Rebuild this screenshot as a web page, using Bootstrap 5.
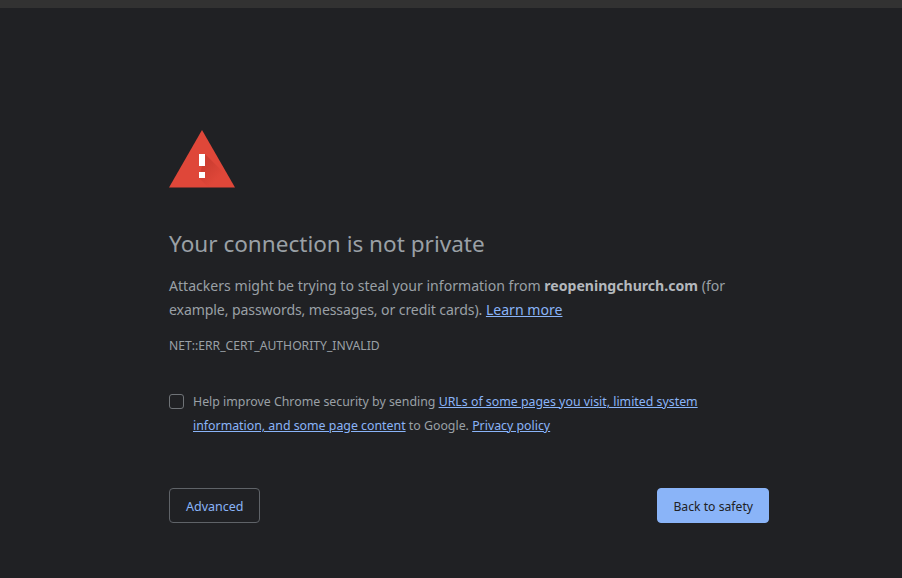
<!DOCTYPE html>
<html lang="en"><head>
  <meta charset="UTF-8" />
  <meta name="viewport" content="width=device-width, initial-scale=1" />
  <title>Privacy error</title>
  <link href="https://cdn.jsdelivr.net/npm/bootstrap@5.3.3/dist/css/bootstrap.min.css" rel="stylesheet" />
  <style>
    html, body { height: 100%; }
    body { background: #202124; color: #9aa0a6; font-family: "Noto Sans", "Open Sans", sans-serif; overflow: hidden; }
    a { color: #8ab4f8; }
    .tab-strip { height: 8px; background: #323232; }
    .interstitial { width: 600px; margin-left: 169px; padding-top: 122px; }
    .warn-icon { display: block; width: 66px; height: 58px; }
    .warn-title { font-size: 22.55px; font-weight: 400; line-height: 30px; color: #9aa0a6; margin: 41px 0 0; }
    .warn-body { font-size: 14.08px; line-height: 24.5px; margin: 14.5px 0 0; }
    .warn-body strong { font-weight: 700; color: #b4b8bd; }
    .tight-line { letter-spacing: -.1px; }
    .warn-code { font-size: 12.17px; line-height: 16px; margin: 15.5px 0 0; }
    .report-row { margin-top: 36px; font-size: 12.35px; line-height: 24px; }
    .fake-check { flex: none; width: 15px; height: 15px; border: 1px solid #6f7377; border-radius: 3px; margin: 4px 9px 0 0; }
    .action-row { margin-top: 50px; }
    .btn-adv, .btn-safe { line-height: 17px; border-radius: 4px; }
    .btn-adv { font-size: 12.5px; padding: 9px 16px 7px 16px; width: 91px; color: #8ab4f8; background: transparent; border: 1px solid #5f6368; }
    .btn-safe { font-size: 12.2px; padding: 9px 15px 7px; color: #202124; background: #8ab4f8; border: 1px solid #8ab4f8; }
  </style>
</head>
<body>
  <div class="tab-strip"></div>
  <div class="interstitial">
    <svg class="warn-icon" viewBox="0 0 66 58" aria-hidden="true">
      <defs>
        <linearGradient id="warnShade" gradientUnits="userSpaceOnUse" x1="33" y1="36" x2="47" y2="50">
          <stop offset="0" stop-color="#a82a20" stop-opacity=".35"/>
          <stop offset="1" stop-color="#a82a20" stop-opacity="0"/>
        </linearGradient>
      </defs>
      <path d="M33 0 66 57.5H0Z" fill="#df4739"/>
      <path d="M36 24 61.3 49.3 66 57.5H39.5L30 48Z" fill="url(#warnShade)"/>
      <path d="M30 24h6v12h-6zM30 42h6v6h-6z" fill="#fff"/>
    </svg>
    <h1 class="warn-title">Your connection is not private</h1>
    <p class="warn-body">Attackers might be trying to steal your information from <strong>reopeningchurch.com</strong> (for <span class="tight-line">example, passwords, messages, or credit cards).</span> <a href="#">Learn more</a></p>
    <div class="warn-code">NET::ERR_CERT_AUTHORITY_INVALID</div>
    <div class="report-row d-flex">
      <span class="fake-check"></span>
      <div>Help improve Chrome security by sending <a href="#">URLs of some pages you visit, limited system information, and some page content</a> to Google. <a href="#">Privacy policy</a></div>
    </div>
    <div class="action-row d-flex justify-content-between">
      <button class="btn btn-adv">Advanced</button>
      <button class="btn btn-safe">Back to safety</button>
    </div>
  </div>
  <script src="https://cdn.jsdelivr.net/npm/bootstrap@5.3.3/dist/js/bootstrap.bundle.min.js"></script>
</body>
</html>
